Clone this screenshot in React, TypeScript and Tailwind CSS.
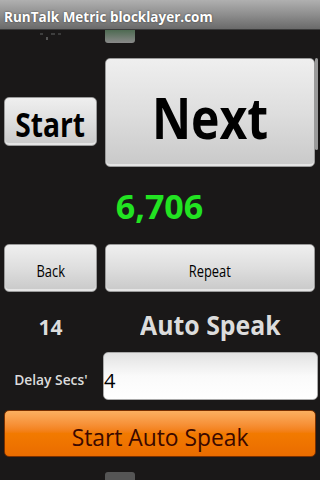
import React from "react";

const btn =
  "rounded-[5px] border border-[#9a9a9a] bg-gradient-to-b from-[#efefef] via-[#dedede] to-[#c9c9c9] shadow-[inset_0_-2px_0_rgba(255,255,255,0.5)] flex items-center justify-center text-black";

export default function App() {
  return (
    <div className="relative w-[320px] h-[480px] overflow-hidden bg-[#1a1818] font-['Open_Sans',sans-serif]">
      <div className="h-[30px] bg-gradient-to-b from-[#b0b0b0] via-[#8e8e8e] to-[#6a6a6a] border-b border-[#3a3a3a] pl-[4px] pt-[3px] flex items-center">
        <span className="inline-block origin-left scale-x-[0.9] text-white font-bold text-[15px] leading-none [text-shadow:0_0_2px_rgba(0,0,0,0.6)]">
          RunTalk Metric blocklayer.com
        </span>
      </div>
      <div className="flex flex-col pl-[4px] pr-[5px]">
        {/* partially visible row */}
        <div className="h-[28px] flex">
          <div className="w-[93px] flex justify-center gap-[3px] pt-[3px]">
            <div className="w-[3px] h-[2px] bg-[#3e3e3e]" />
            <div className="w-[2px] h-[3px] mt-[4px] bg-[#555]" />
            <div className="w-[4px] h-[2px] bg-[#3e3e3e]" />
            <div className="w-[3px] h-[2px] bg-[#3a3a3a]" />
          </div>
          <div className="ml-[8px] w-[30px] h-[13px] rounded-b-[3px] bg-gradient-to-b from-[#4e6a52] to-[#8a8a8a]" />
        </div>
        {/* Start / Next */}
        <div className="flex gap-[8px] items-start">
          <div className={`${btn} w-[93px] h-[49px] mt-[39px] pt-[5px]`}>
            <span className="inline-block scale-x-[0.83] font-bold text-[34px] leading-none">Start</span>
          </div>
          <div className={`${btn} flex-1 h-[109px] pt-[8px]`}>
            <span className="inline-block scale-x-[0.83] font-bold text-[58px] leading-none">Next</span>
          </div>
        </div>
        {/* number */}
        <div className="h-[77px] flex items-center justify-center">
          <span className="font-bold text-[34px] text-[#22e322] leading-none">6,706</span>
        </div>
        {/* Back / Repeat */}
        <div className="flex gap-[8px] h-[48px]">
          <div className={`${btn} w-[93px] pt-[5px]`}>
            <span className="inline-block scale-x-[0.76] text-[17px] leading-none">Back</span>
          </div>
          <div className={`${btn} flex-1 pt-[5px]`}>
            <span className="inline-block scale-x-[0.76] text-[17px] leading-none">Repeat</span>
          </div>
        </div>
        {/* 14 / Auto Speak */}
        <div className="flex gap-[8px] h-[60px] items-baseline pt-[19px]">
          <div className="w-[93px] flex justify-center">
            <span className="font-bold text-[21px] text-[#dcdcdc] leading-none">14</span>
          </div>
          <div className="flex-1 flex justify-center">
            <span className="inline-block scale-x-[0.92] font-bold text-[27px] text-[#dcdcdc] leading-none">Auto Speak</span>
          </div>
        </div>
        {/* Delay */}
        <div className="flex h-[48px] items-center">
          <div className="w-[93px] flex justify-center pt-[6px]">
            <span className="inline-block scale-x-[0.92] font-semibold text-[15px] text-[#dcdcdc] leading-none">Delay Secs'</span>
          </div>
          <div className="flex-1 ml-[6px] -mr-[3px] h-[48px] rounded-[5px] bg-gradient-to-b from-[#e2e2e2] via-[#fafafa] to-[#ffffff] border border-[#aaa] flex items-center pt-[9px]">
            <span className="text-[20px] text-black leading-none">4</span>
          </div>
        </div>
        {/* Start Auto Speak */}
        <div className="mt-[10px] -mr-[1px] h-[47px] rounded-[5px] border border-[#7a3000] bg-gradient-to-b from-[#fbb060] via-[#f27a00] to-[#ea6c00] flex items-center justify-center pt-[7px]">
          <span className="inline-block scale-x-[0.95] text-[24px] text-[#3a0800] leading-none">Start Auto Speak</span>
        </div>
        <div className="flex mt-[15px]">
          <div className="w-[101px]" />
          <div className="w-[30px] h-[10px] rounded-t-[3px] bg-[#555]" />
        </div>
      </div>
      <div className="absolute left-[315px] top-[58px] w-[3px] h-[92px] rounded-full bg-[#9a9a9a]" />
    </div>
  );
}
